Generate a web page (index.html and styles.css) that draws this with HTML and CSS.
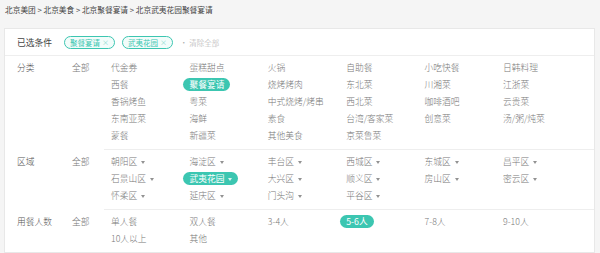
FILE: index.html
```html
<!DOCTYPE html>
<html lang="zh-CN">
<head>
<meta charset="utf-8">
<title>北京武夷花园聚餐宴请</title>
<link rel="stylesheet" href="styles.css">
</head>
<body>
<div class="crumbs">北京美团 &gt; 北京美食 &gt; 北京聚餐宴请 &gt; 北京武夷花园聚餐宴请</div>
<div class="card">
  <div class="selected">
    <span class="sel-label">已选条件</span>
    <span class="tag">聚餐宴请 <span class="x">×</span></span>
    <span class="tag">武夷花园 <span class="x">×</span></span>
    <span class="clear">· 清除全部</span>
  </div>

  <div class="group">
    <div class="label">分类</div>
    <div class="all">全部</div>
    <div class="items">
      <span>代金券</span><span>蛋糕甜点</span><span>火锅</span><span>自助餐</span><span>小吃快餐</span><span>日韩料理</span>
      <span>西餐</span><span class="on">聚餐宴请</span><span>烧烤烤肉</span><span>东北菜</span><span>川湘菜</span><span>江浙菜</span>
      <span>香锅烤鱼</span><span>粤菜</span><span>中式烧烤/烤串</span><span>西北菜</span><span>咖啡酒吧</span><span>云贵菜</span>
      <span>东南亚菜</span><span>海鲜</span><span>素食</span><span>台湾/客家菜</span><span>创意菜</span><span>汤/粥/炖菜</span>
      <span>蒙餐</span><span>新疆菜</span><span>其他美食</span><span>京菜鲁菜</span>
    </div>
  </div>

  <div class="group">
    <div class="label">区域</div>
    <div class="all">全部</div>
    <div class="items">
      <span class="dd">朝阳区</span><span class="dd">海淀区</span><span class="dd">丰台区</span><span class="dd">西城区</span><span class="dd">东城区</span><span class="dd">昌平区</span>
      <span class="dd">石景山区</span><span class="dd on">武夷花园</span><span class="dd">大兴区</span><span class="dd">顺义区</span><span class="dd">房山区</span><span class="dd">密云区</span>
      <span class="dd">怀柔区</span><span class="dd">延庆区</span><span class="dd">门头沟</span><span class="dd">平谷区</span>
    </div>
  </div>

  <div class="group last">
    <div class="label">用餐人数</div>
    <div class="all">全部</div>
    <div class="items">
      <span>单人餐</span><span>双人餐</span><span>3-4人</span><span class="on">5-6人</span><span>7-8人</span><span>9-10人</span>
      <span>10人以上</span><span>其他</span>
    </div>
  </div>
</div>
</body>
</html>
```

FILE: styles.css
```css
* { box-sizing: border-box; }

body {
  margin: 0;
  background: #f5f5f5;
  font-family: "Noto Sans CJK SC", "Noto Sans", sans-serif;
  font-size: 8.75px;
  font-weight: 300;
  color: #777;
}

.crumbs {
  height: 28px;
  line-height: 20px;
  padding-left: 5px;
  font-size: 7.7px;
  font-weight: 400;
  color: #444;
}

.card {
  margin: 0 5px 0 4px;
  background: #fff;
  border: 1px solid #e8e8e8;
}

.selected {
  height: 27px;
  display: flex;
  align-items: center;
  padding-left: 12px;
  border-bottom: 1px solid #eeeeee;
}

.sel-label {
  color: #444;
  font-weight: 400;
  width: 47px;
}

.tag {
  display: inline-flex;
  align-items: center;
  height: 13px;
  padding: 0 5px;
  margin-right: 7px;
  border: 1px solid #3cc6b1;
  border-radius: 7px;
  background: #f2fcfa;
  color: #3cc6b1;
  font-size: 7.5px;
  font-weight: 400;
  line-height: 11px;
}

.tag .x {
  margin-left: 2px;
  color: #8ad9cc;
  font-size: 7px;
}

.clear {
  color: #aaa;
  font-size: 7.5px;
}

.group {
  display: flex;
  line-height: 17px;
}

.label {
  width: 67px;
  padding: 3px 0 0 12px;
  color: #555;
}

.all {
  width: 32px;
  padding-top: 3px;
}

.items {
  flex: 1;
  display: grid;
  grid-template-columns: repeat(6, 78.4px);
  align-content: start;
  padding: 3px 0 5px 1px;
  border-bottom: 1px solid #eeeeee;
}

.group.last .items {
  border-bottom: none;
}

.items span {
  justify-self: start;
  padding: 0 6px;
  white-space: nowrap;
}

.items span.on {
  background: #3cc6b1;
  color: #fff;
  font-weight: 400;
  border-radius: 7px;
  line-height: 13px;
  height: 13px;
  margin-top: 2px;
}

.dd::after {
  content: "";
  display: inline-block;
  margin-left: 4px;
  vertical-align: middle;
  border-left: 2.5px solid transparent;
  border-right: 2.5px solid transparent;
  border-top: 3px solid currentColor;
  opacity: 0.8;
}
```
